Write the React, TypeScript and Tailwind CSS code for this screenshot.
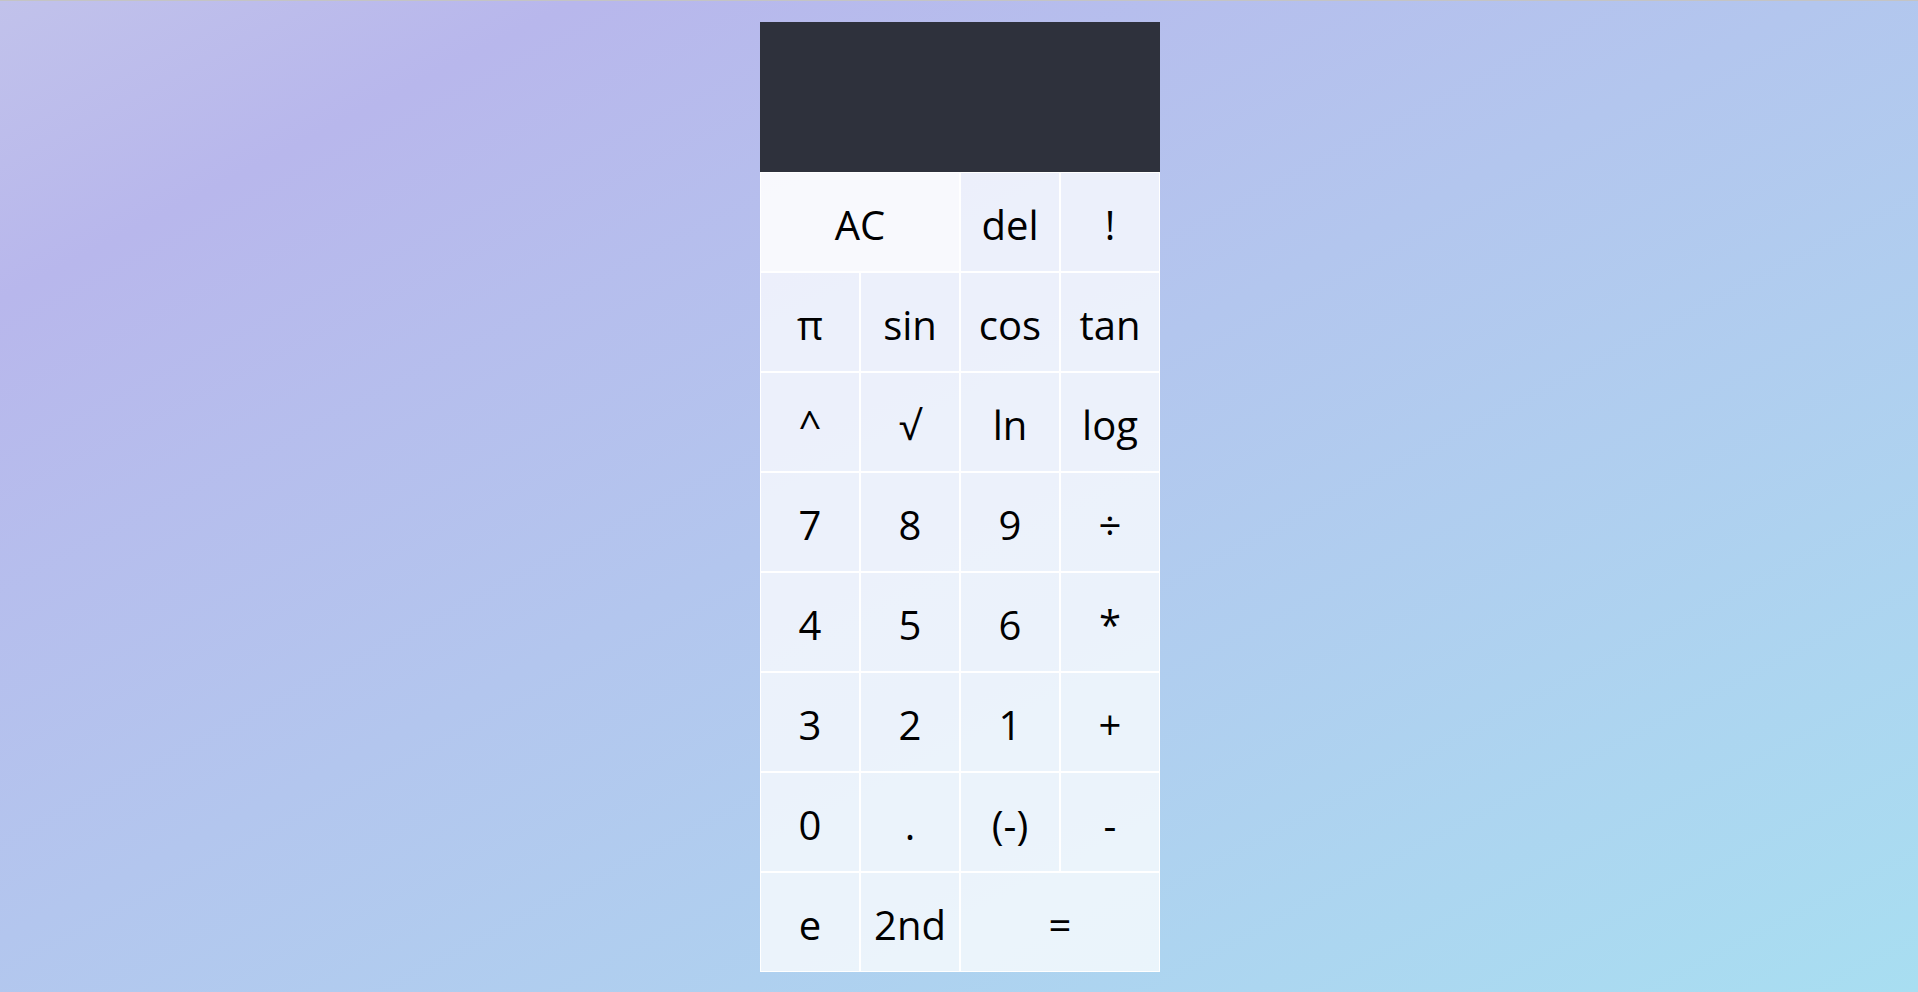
import React from 'react'

// 按钮配置：label 为显示文字，wide 表示占两列，light 表示更亮的背景
type Key = { label: string; wide?: boolean; light?: boolean }

const keys: Key[] = [
  { label: 'AC', wide: true, light: true },
  { label: 'del' },
  { label: '!' },
  { label: 'π' },
  { label: 'sin' },
  { label: 'cos' },
  { label: 'tan' },
  { label: '^' },
  { label: '√' },
  { label: 'ln' },
  { label: 'log' },
  { label: '7' },
  { label: '8' },
  { label: '9' },
  { label: '÷' },
  { label: '4' },
  { label: '5' },
  { label: '6' },
  { label: '*' },
  { label: '3' },
  { label: '2' },
  { label: '1' },
  { label: '+' },
  { label: '0' },
  { label: '.' },
  { label: '(-)' },
  { label: '-' },
  { label: 'e' },
  { label: '2nd' },
  { label: '=', wide: true },
]

export default function App() {
  return (
    <div className="min-h-screen border-t border-[#c4c4c4] bg-linear-to-br from-[#c1c2eb] via-[#b8b7ec] via-15% to-[#a8def1] pt-[21px] pb-[21px] pl-[2px]">
      <div className="mx-auto w-[400px] font-['Open_Sans','Noto_Sans',sans-serif] text-black">
        {/* 显示屏 */}
        <div className="h-[150px] bg-[#2e313c]"></div>

        {/* 按键网格 */}
        <div className="grid grid-cols-4">
          {keys.map((k) => (
            <button
              key={k.label}
              className={`
                ${k.wide ? 'col-span-2' : ''}
                ${k.light ? 'bg-white/90' : 'bg-white/75'}
                h-[100px] border border-white pt-[6px] text-[40px] leading-none cursor-pointer
              `}
            >
              {k.label}
            </button>
          ))}
        </div>
      </div>
    </div>
  )
}
